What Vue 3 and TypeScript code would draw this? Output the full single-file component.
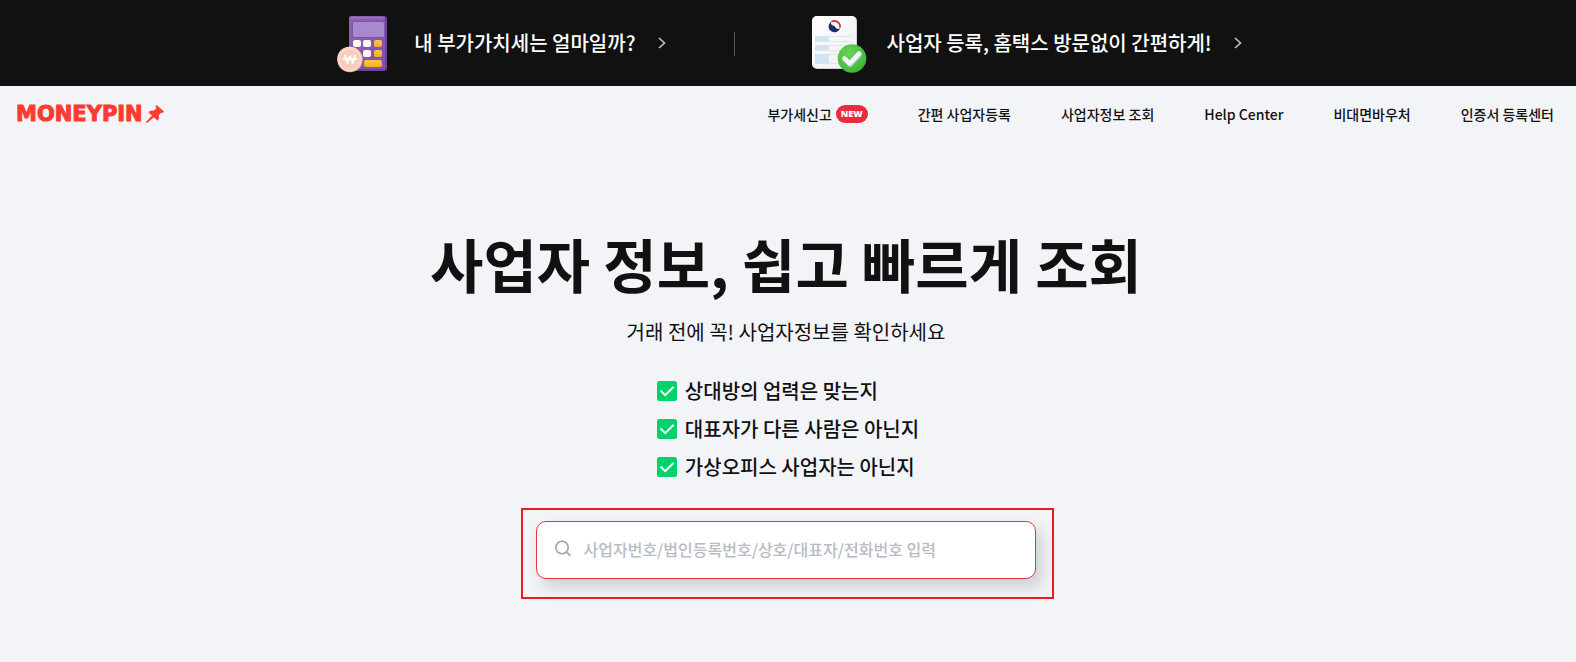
<script setup lang="ts">
import { ref } from 'vue'

interface NavItem {
  label: string
  badge?: string
}

const navItems: NavItem[] = [
  { label: '부가세신고', badge: 'NEW' },
  { label: '간편 사업자등록' },
  { label: '사업자정보 조회' },
  { label: 'Help Center' },
  { label: '비대면바우처' },
  { label: '인증서 등록센터' },
]

const checks: string[] = [
  '상대방의 업력은 맞는지',
  '대표자가 다른 사람은 아닌지',
  '가상오피스 사업자는 아닌지',
]

const query = ref('')
</script>

<template>
  <div class="page">
    <aside class="banner">
      <a class="promo" href="#vat">
        <svg class="promo-icon" width="58" height="60" viewBox="0 0 58 60" aria-hidden="true">
          <defs>
            <linearGradient id="calcBody" x1="0" y1="0" x2="1" y2="1">
              <stop offset="0" stop-color="#8d63b4" />
              <stop offset="1" stop-color="#7e52a5" />
            </linearGradient>
            <linearGradient id="calcKey" x1="0" y1="0" x2="0" y2="1">
              <stop offset="0" stop-color="#ffc646" />
              <stop offset="1" stop-color="#f2ae2c" />
            </linearGradient>
          </defs>
          <rect x="13" y="3" width="38" height="55" rx="3" fill="#6e4494" />
          <rect x="13" y="3" width="36" height="53" rx="3" fill="url(#calcBody)" />
          <path d="M15 5h33" stroke="#a27bc6" stroke-width="1" />
          <rect x="16" y="8" width="32" height="17" rx="2" fill="#8055a8" />
          <rect x="17" y="9" width="31" height="15" rx="1.5" fill="#a888ce" />
          <rect x="17" y="27" width="8" height="7" rx="2" fill="#fff7f6" />
          <rect x="27" y="27" width="8" height="7" rx="2" fill="#fff7f6" />
          <rect x="38" y="27" width="8" height="7" rx="2" fill="url(#calcKey)" />
          <rect x="27" y="37" width="8" height="7" rx="2" fill="#fff7f6" />
          <rect x="38" y="37" width="8" height="7" rx="2" fill="url(#calcKey)" />
          <rect x="28" y="47" width="18" height="7" rx="2" fill="url(#calcKey)" />
          <circle cx="14" cy="46.500" r="12.700" fill="#eab7a0" />
          <circle cx="13.500" cy="46" r="12.200" fill="#fad6c5" />
          <circle cx="14" cy="46.500" r="9.200" fill="#f3c2ac" />
          <circle cx="14.200" cy="46.700" r="8.600" fill="#f7cebb" />
          <path
            d="M9 42.500l2.300 7.500 2.700-7 2.700 7 2.300-7.500M7.500 46h13"
            fill="none"
            stroke="#fff"
            stroke-width="1.900"
            stroke-linejoin="round"
            stroke-linecap="round"
          />
        </svg>
        <span class="promo-text">내 부가가치세는 얼마일까?</span>
        <svg class="chevron" width="8" height="12" viewBox="0 0 8 12" aria-hidden="true">
          <path d="M1 1l5.500 5L1 11" fill="none" stroke="#c4c4c4" stroke-width="1.600" />
        </svg>
      </a>
      <span class="divider"></span>
      <a class="promo" href="#register">
        <svg class="promo-icon" width="56" height="60" viewBox="0 0 56 60" aria-hidden="true">
          <defs>
            <linearGradient id="paper" x1="0" y1="0" x2="1" y2="1">
              <stop offset="0" stop-color="#ffffff" />
              <stop offset="1" stop-color="#efeff1" />
            </linearGradient>
            <radialGradient id="seal" cx="0.4" cy="0.35" r="0.7">
              <stop offset="0" stop-color="#68d755" />
              <stop offset="1" stop-color="#3db436" />
            </radialGradient>
          </defs>
          <rect x="1" y="3" width="45" height="53" rx="5" fill="#d5d4d5" />
          <rect x="1" y="3" width="44" height="52" rx="5" fill="url(#paper)" />
          <path d="M4 23.500h37M4 32.500h37M4 41.500h37M4 28.500h37M4 37.500h37M4 50.500h37" stroke="#e3e5e9" stroke-width="1" />
          <rect x="4" y="23" width="14" height="5" fill="#cfe5f3" />
          <rect x="4" y="32" width="14" height="5" fill="#cfe5f3" />
          <rect x="4" y="41" width="14" height="10" fill="#cfe5f3" />
          <path
            d="M20.500 8.500C16.800 11 16.700 16 20.300 18.300C23.800 20.400 28.300 18.800 29.200 15C27.600 16.600 25.400 16.200 24.500 14.300C23.600 12.500 21.600 12.800 20.600 11.800C19.800 10.900 19.800 9.700 20.500 8.500Z"
            fill="#16305f"
          />
          <path
            d="M20.500 8.700C24 6.700 28 8.700 28.900 12C29.100 12.900 29.100 13.800 28.800 14.600"
            fill="none"
            stroke="#d52b46"
            stroke-width="1.700"
          />
          <circle cx="41" cy="45.500" r="14.300" fill="url(#seal)" />
          <path d="M34 46.500l5.200 5L48.500 41.500" fill="none" stroke="#b2c5d3" stroke-width="5" stroke-linecap="round" stroke-linejoin="round" />
          <path d="M33.500 45.500l5.200 5L48 40.500" fill="none" stroke="#f5f4ff" stroke-width="4.500" stroke-linecap="round" stroke-linejoin="round" />
        </svg>
        <span class="promo-text">사업자 등록, 홈택스 방문없이 간편하게!</span>
        <svg class="chevron" width="8" height="12" viewBox="0 0 8 12" aria-hidden="true">
          <path d="M1 1l5.500 5L1 11" fill="none" stroke="#c4c4c4" stroke-width="1.600" />
        </svg>
      </a>
    </aside>

    <header class="header">
      <a class="logo" href="#home">
        <span>MONEYPIN</span>
        <svg width="18" height="18" viewBox="0 0 18 18" aria-hidden="true">
          <path
            d="M10.800 0.400L17.700 6.600L16.600 7.700L15 7.400L12.400 10.500C13.200 12.500 12.800 14 11.600 15.300L7.900 12L1 17.800L0.300 17.100L6.200 10.500L2.800 7.300C4.200 5.900 6 5.600 7.700 6.100L10.600 3.300L9.800 1.500Z"
            fill="#ff3a2f"
            stroke="#ff3a2f"
            stroke-width="0.600"
            stroke-linejoin="round"
          />
        </svg>
      </a>
      <nav class="nav">
        <a v-for="item in navItems" :key="item.label" class="nav-link" href="#menu">
          {{ item.label }}<span v-if="item.badge" class="badge">{{ item.badge }}</span>
        </a>
      </nav>
    </header>

    <main class="hero">
      <h1 class="title">사업자 정보, 쉽고 빠르게 조회</h1>
      <p class="subtitle">거래 전에 꼭! 사업자정보를 확인하세요</p>
      <ul class="checks">
        <li v-for="text in checks" :key="text" class="check">
          <svg width="20" height="20" viewBox="0 0 20 20" aria-hidden="true">
            <rect width="20" height="20" rx="2.500" fill="#03d26a" />
            <path d="M3.500 9.500l4.700 4.700L16.700 5.800" fill="none" stroke="#fff" stroke-width="1.900" />
          </svg>
          <span>{{ text }}</span>
        </li>
      </ul>
      <form class="frame" role="search" @submit.prevent>
        <label class="search">
          <svg width="16" height="18" viewBox="0 0 16 18" aria-hidden="true">
            <circle cx="7" cy="7.500" r="6.200" fill="none" stroke="#a3a3a3" stroke-width="1.600" />
            <path d="M11.400 11.900L15.400 15.900" stroke="#a3a3a3" stroke-width="1.600" />
          </svg>
          <input
            v-model="query"
            type="text"
            aria-label="사업자 검색"
            placeholder="사업자번호/법인등록번호/상호/대표자/전화번호 입력"
          />
        </label>
      </form>
    </main>
  </div>
</template>

<style>
body {
  margin: 0;
  background: #f3f4f8;
}
</style>

<style scoped>
.page {
  min-height: 100vh;
  background: #f3f4f8;
  color: #111;
  font-family: "Noto Sans CJK KR", "Noto Sans", sans-serif;
}

a {
  color: inherit;
  text-decoration: none;
}

.banner {
  display: flex;
  align-items: center;
  justify-content: center;
  height: 86px;
  padding-left: 2px;
  background: #111;
  color: #fff;
}

.promo {
  display: flex;
  align-items: center;
}

.promo-icon {
  margin-right: 20px;
}

.promo-text {
  font-size: 20px;
  font-weight: 500;
  line-height: 28px;
}

.chevron {
  margin-left: 22px;
}

.divider {
  width: 1px;
  height: 24px;
  margin: 2px 76px 0 68px;
  background: #555;
}

.header {
  display: flex;
  align-items: center;
  justify-content: space-between;
  height: 56px;
  padding: 0 22px 0 16px;
}

.logo {
  display: flex;
  align-items: center;
  gap: 3px;
  color: #ff3a2f;
  font-family: "DejaVu Sans", sans-serif;
  font-size: 21px;
  font-weight: 700;
  line-height: 24px;
  -webkit-text-stroke: 1px #ff3a2f;
}

.nav {
  display: flex;
  gap: 50px;
}

.nav-link {
  display: flex;
  align-items: center;
  gap: 4px;
  font-size: 14px;
  font-weight: 500;
  line-height: 20px;
}

.badge {
  padding: 0 5px;
  border-radius: 9px;
  background: #e92c3f;
  color: #fff;
  font-family: "Noto Sans", sans-serif;
  font-size: 9px;
  font-weight: 900;
  line-height: 18px;
}

.hero {
  display: flex;
  flex-direction: column;
  align-items: center;
  padding-top: 80px;
}

.title,
.subtitle {
  margin: 0 4px 0 0;
}

.title {
  font-size: 58px;
  font-weight: 700;
  line-height: 82px;
}

.subtitle {
  margin-top: 13px;
  font-size: 20px;
  font-weight: 400;
  line-height: 30px;
}

.checks {
  display: flex;
  flex-direction: column;
  gap: 8px;
  margin: 29px 0 0;
  padding: 0;
  list-style: none;
}

.check {
  display: flex;
  align-items: center;
  gap: 8px;
  font-size: 20px;
  font-weight: 500;
  line-height: 30px;
}

.frame {
  margin: 26px 2px 0 0;
  padding: 11px 16px 18px 13px;
  border: 2px solid #ed1c24;
}

.search {
  box-sizing: border-box;
  display: flex;
  align-items: center;
  gap: 13px;
  width: 500px;
  height: 58px;
  padding: 0 18px 2px;
  border: 1px solid #e33442;
  border-radius: 10px;
  background: #fff;
  box-shadow: 6px 8px 16px rgba(0, 0, 0, 0.16);
}

.search input {
  flex: 1;
  min-width: 0;
  padding: 0;
  border: 0;
  outline: 0;
  background: transparent;
  color: #111;
  font-family: inherit;
  font-size: 16px;
  font-weight: 500;
  line-height: 24px;
}

.search input::placeholder {
  color: #b8bbc4;
  opacity: 1;
}
</style>
